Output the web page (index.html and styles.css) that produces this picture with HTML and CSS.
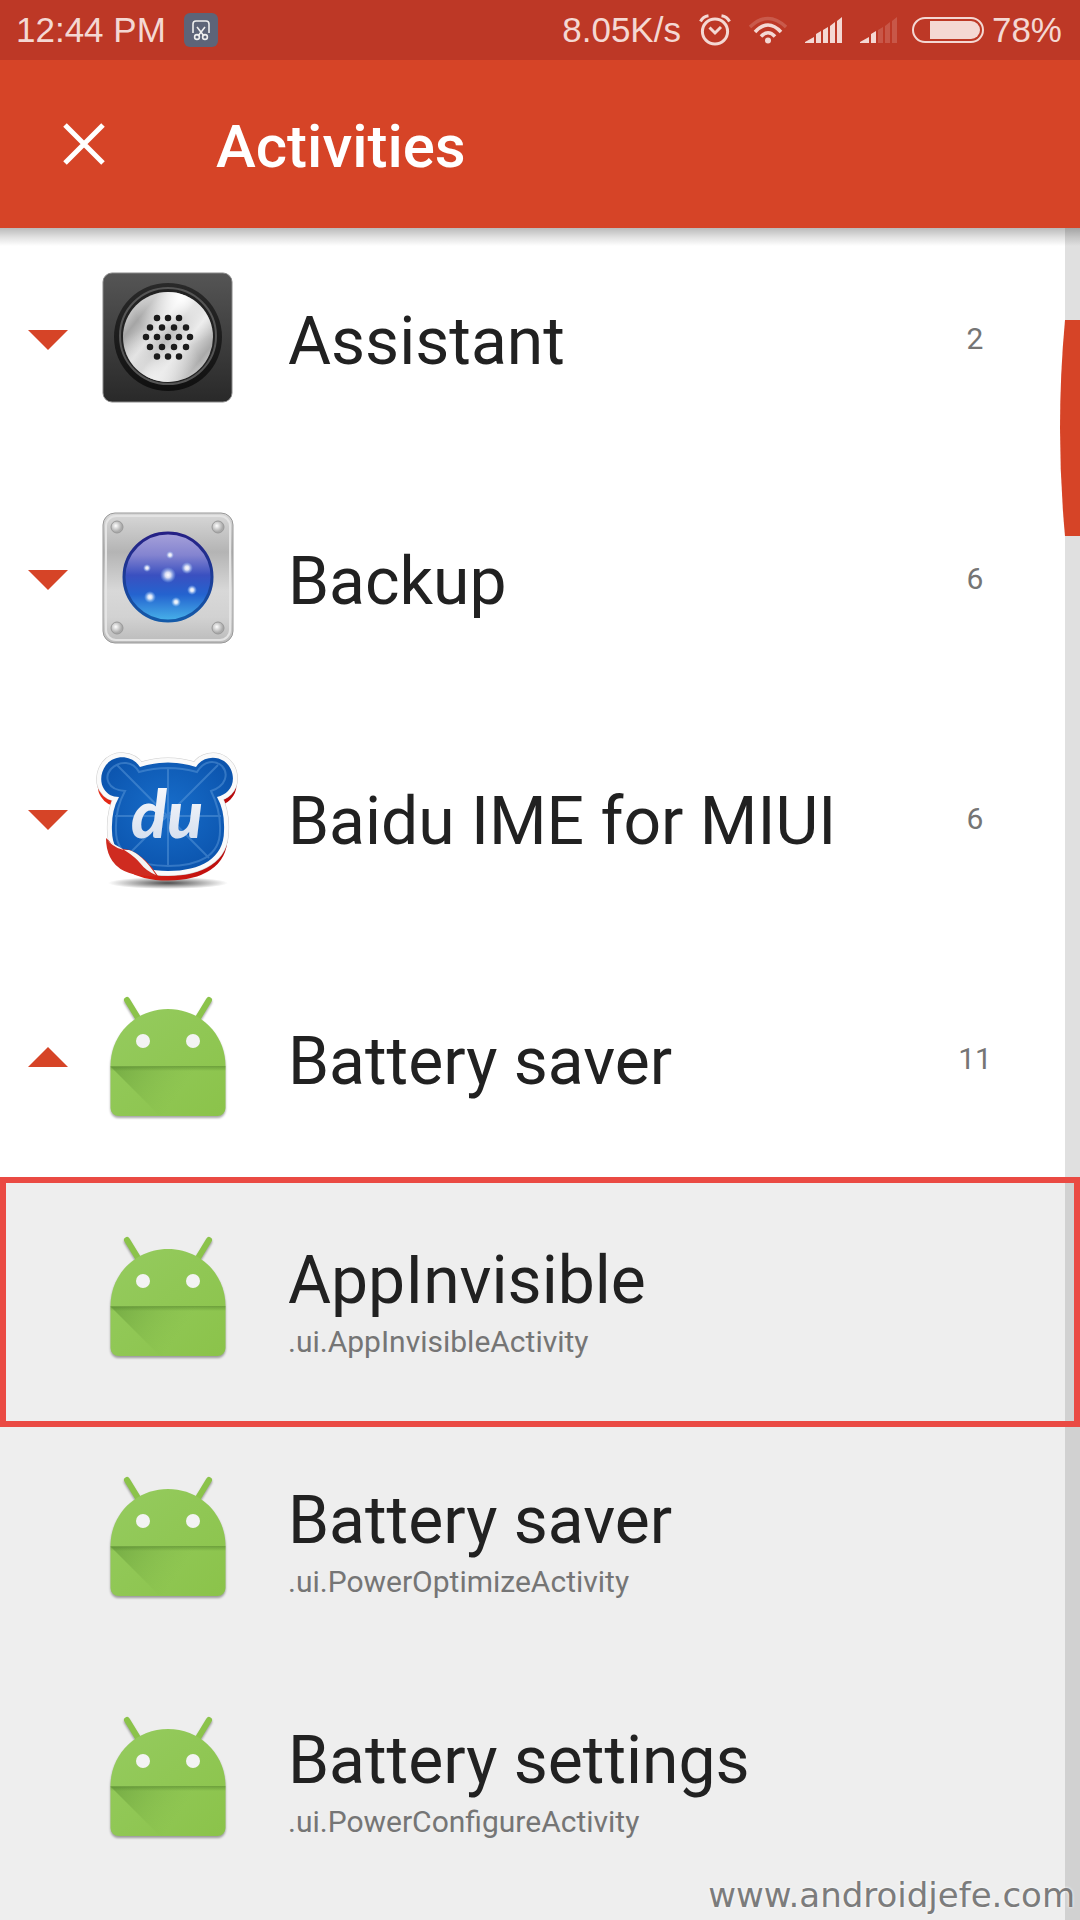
FILE: index.html
```html
<!DOCTYPE html>
<html lang="en">
<head>
<meta charset="utf-8">
<meta name="viewport" content="width=device-width, initial-scale=1">
<title>Activities</title>
<link rel="stylesheet" href="styles.css">
</head>
<body>
<svg class="defs" aria-hidden="true">
  <defs>
    <linearGradient id="green" x1="0" y1="0" x2="1" y2="1"><stop offset="0" stop-color="#95cb5f"/><stop offset="1" stop-color="#8bc34a"/></linearGradient>
    <linearGradient id="fold" gradientUnits="userSpaceOnUse" x1="16" y1="82" x2="74" y2="122"><stop offset="0" stop-color="#5d9334" stop-opacity=".55"/><stop offset="1" stop-color="#7cb342" stop-opacity="0"/></linearGradient>
    <linearGradient id="crease" x1="0" y1="0" x2="0" y2="1"><stop offset="0" stop-color="#4c7a28" stop-opacity=".5"/><stop offset="1" stop-color="#4c7a28" stop-opacity="0"/></linearGradient>
    <symbol id="android" viewBox="0 0 144 144">
      <g class="droid">
        <path d="M31 15 42 33M113 15 102 33" stroke="#8bc34a" stroke-width="6" stroke-linecap="round"/>
        <path d="M14.500 81C14.500 49 40 24 72 24s57.500 25 57.500 57v42a8 8 0 0 1-8 8h-99a8 8 0 0 1-8-8z" fill="url(#green)"/>
      </g>
      <path d="M15 82h85L80 131H64z" fill="url(#fold)"/>
      <path d="M14.500 81h115v5h-115z" fill="url(#crease)"/>
      <circle cx="47" cy="56" r="7" fill="#f3f3f3"/><circle cx="97" cy="56" r="7" fill="#f3f3f3"/>
    </symbol>
  </defs>
</svg>

<header class="top">
  <div class="status">
    <div class="status-side">
      <span>12:44 PM</span>
      <svg class="clip" viewBox="0 0 34 34" aria-hidden="true"><rect width="34" height="34" rx="6" fill="#5d6478"/><g fill="none" stroke="#eee" stroke-width="1.6"><path d="M9 20v-9q0-3 3-3h10q3 0 3 3v9M13 14l7 9M21 14l-7 9"/><circle cx="13" cy="24" r="2.4"/><circle cx="21" cy="24" r="2.4"/></g></svg>
    </div>
    <div class="status-side right">
      <span>8.05K/s</span>
      <svg class="alarm" viewBox="0 0 32 32" aria-hidden="true"><g fill="none" stroke="#f4d8d3" stroke-width="3"><circle cx="16" cy="17.500" r="12.600"/><path d="M10.500 13.500 16 19l6-6"/><path d="M1.500 7.500Q4 2.500 9.500 1.700M30.500 7.500Q28 2.500 22.500 1.700"/></g></svg>
      <svg class="wifi" viewBox="0 0 38 28" aria-hidden="true"><g fill="none" stroke="#f4d8d3" stroke-width="3.500"><path d="M1 11Q19-6 37 11" stroke-opacity=".22"/><path d="M6 16Q19 2 32 16M12 20.500Q19 13 26 20.500"/></g><circle cx="19" cy="24.500" r="3" fill="#f4d8d3"/></svg>
      <svg class="signal" viewBox="0 0 37 26" aria-hidden="true"><path d="M0 26v-1l9-5v6zM11 26v-9l5-3v12zM18 26V13l5-3v16zM25 26V9l5-4v21zM32 26V4l5-4v26z" fill="#f4d8d3"/></svg>
      <svg class="signal" viewBox="0 0 37 26" aria-hidden="true"><path d="M0 26v-1l9-5v6zM11 26v-9l5-3v12z" fill="#f4d8d3"/><path d="M18 26V13l5-3v16zM25 26V9l5-4v21zM32 26V4l5-4v26z" fill="#f4d8d3" fill-opacity=".2"/></svg>
      <svg class="battery" viewBox="0 0 72 26" aria-hidden="true"><rect x="1" y="1" width="70" height="24" rx="12" fill="none" stroke="#f4d8d3" stroke-width="2"/><path d="M18 4h41a9 9 0 0 1 0 18H18z" fill="#f4d8d3"/></svg>
      <span>78%</span>
    </div>
  </div>
  <div class="appbar">
    <button class="close" type="button" aria-label="Close"><svg viewBox="0 0 42 42" aria-hidden="true"><path d="M2 2 40 40M40 2 2 40" stroke="#fff" stroke-width="5"/></svg></button>
    <h1>Activities</h1>
  </div>
</header>

<main class="list">
  <section class="row">
    <button class="toggle" type="button" aria-expanded="false" aria-label="Expand Assistant"></button>
    <svg class="icon" viewBox="0 0 144 144" aria-hidden="true">
      <defs>
        <linearGradient id="dark" x1="0" y1="0" x2="0" y2="1"><stop offset="0" stop-color="#555"/><stop offset="1" stop-color="#292929"/></linearGradient>
        <linearGradient id="ring" x1="0" y1="0" x2="0" y2="1"><stop offset="0" stop-color="#292929"/><stop offset="1" stop-color="#101010"/></linearGradient>
        <linearGradient id="steel" x1="0" y1=".1" x2="1" y2=".9"><stop offset="0" stop-color="#eee"/><stop offset=".2" stop-color="#a5a5a5"/><stop offset=".38" stop-color="#ddd"/><stop offset=".5" stop-color="#aaa"/><stop offset=".65" stop-color="#e5e5e5"/><stop offset=".84" stop-color="#a9a9a9"/><stop offset="1" stop-color="#e5e5e5"/></linearGradient>
        <radialGradient id="shine" cx=".65" cy=".05" r=".55"><stop offset="0" stop-color="#fff"/><stop offset="1" stop-color="#fff" stop-opacity="0"/></radialGradient>
        <radialGradient id="shine2" cx=".35" cy=".95" r=".55"><stop offset="0" stop-color="#eee"/><stop offset="1" stop-color="#eee" stop-opacity="0"/></radialGradient>
      </defs>
      <rect x="7" y="8" width="129" height="129" rx="9" fill="url(#dark)" stroke="#888"/>
      <circle cx="72" cy="72" r="54" fill="url(#ring)"/><circle cx="72" cy="71" r="48" fill="#222" stroke="#555" stroke-width="2"/>
      <circle cx="72" cy="72" r="45" fill="url(#steel)"/><circle cx="72" cy="72" r="45" fill="url(#shine)"/><circle cx="72" cy="72" r="45" fill="url(#shine2)"/>
      <path d="M61 53h0M72 53h0M83 53h0M54 62.500h0M66 62.500h0M78 62.500h0M90 62.500h0M50 72h0M61 72h0M72 72h0M83 72h0M94 72h0M54 82h0M66 82h0M78 82h0M90 82h0M61 91.500h0M72 91.500h0M83 91.500h0" stroke="#1b1b1b" stroke-width="6.500" stroke-linecap="round"/>
    </svg>
    <h2 class="name">Assistant</h2>
    <span class="count">2</span>
  </section>

  <section class="row">
    <button class="toggle" type="button" aria-expanded="false" aria-label="Expand Backup"></button>
    <svg class="icon" viewBox="0 0 144 144" aria-hidden="true">
      <defs>
        <linearGradient id="plate" x1="0" y1="0" x2="0" y2="1"><stop offset="0" stop-color="#d8d8d8"/><stop offset=".3" stop-color="#b4b4b4"/><stop offset=".6" stop-color="#d8d8d8"/><stop offset=".8" stop-color="#d2d2d2"/><stop offset="1" stop-color="#bbb"/></linearGradient>
        <linearGradient id="orb" x1="0" y1="0" x2="0" y2="1"><stop offset="0" stop-color="#a6a1da"/><stop offset=".25" stop-color="#8484d0"/><stop offset=".48" stop-color="#3a50c0"/><stop offset=".7" stop-color="#2463cf"/><stop offset="1" stop-color="#48b3ea"/></linearGradient>
        <linearGradient id="orbEdge" x1="0" y1="0" x2="0" y2="1"><stop offset="0" stop-color="#252085"/><stop offset="1" stop-color="#145aa9"/></linearGradient>
        <radialGradient id="glow"><stop offset="0" stop-color="#fff"/><stop offset=".35" stop-color="#fff" stop-opacity=".8"/><stop offset="1" stop-color="#9cf" stop-opacity="0"/></radialGradient>
        <radialGradient id="screw" cx=".4" cy=".4"><stop offset="0" stop-color="#fff"/><stop offset="1" stop-color="#aaa"/></radialGradient>
      </defs>
      <rect x="7" y="8" width="130" height="130" rx="12" fill="url(#plate)" stroke="#999"/>
      <rect x="10" y="11" width="124" height="124" rx="10" fill="none" stroke="#e4e4e4" stroke-width="2"/>
      <g fill="url(#screw)" stroke="#999"><circle cx="21" cy="22" r="6"/><circle cx="122" cy="22" r="6"/><circle cx="21" cy="123" r="6"/><circle cx="122" cy="123" r="6"/></g>
      <circle cx="72" cy="72" r="44" fill="url(#orb)" stroke="url(#orbEdge)" stroke-width="3"/>
      <g fill="url(#glow)"><circle cx="72" cy="70" r="8"/><circle cx="74" cy="50" r="4"/><circle cx="51" cy="63" r="4"/><circle cx="91" cy="63" r="6"/><circle cx="96" cy="85" r="5"/><circle cx="54" cy="92" r="6"/><circle cx="80" cy="97" r="5"/></g>
    </svg>
    <h2 class="name">Backup</h2>
    <span class="count">6</span>
  </section>

  <section class="row">
    <button class="toggle" type="button" aria-expanded="false" aria-label="Expand Baidu IME for MIUI"></button>
    <svg class="icon" viewBox="0 0 144 144" aria-hidden="true">
      <defs>
        <radialGradient id="floor"><stop offset="0" stop-color="#222" stop-opacity=".8"/><stop offset="1" stop-color="#222" stop-opacity="0"/></radialGradient>
        <radialGradient id="blue" cx=".5" cy=".45" r=".6"><stop offset="0" stop-color="#176dca"/><stop offset="1" stop-color="#0b53ac"/></radialGradient>
        <linearGradient id="red" x1="0" y1="0" x2="1" y2="0"><stop offset="0" stop-color="#e52a16"/><stop offset="1" stop-color="#b90a0c"/></linearGradient>
        <linearGradient id="silver" x1="0" y1="0" x2="0" y2="1"><stop offset="0" stop-color="#fff"/><stop offset="1" stop-color="#cfdaec"/></linearGradient>
        <path id="bear" d="M44 22Q72 13 100 22C106 12 119 10 128 16 138 23 140 38 132 46Q128 50 121 52Q129 66 128 86C128 113 105 126 72 126S16 112 16 86Q15 66 23 52C16 52 11 49 8 44 4 38 4 28 10 20 19 9 36 10 44 22z"/>
      </defs>
      <ellipse cx="72" cy="138" rx="60" ry="6" fill="url(#floor)"/>
      <use href="#bear" y="6" fill="url(#red)" stroke="url(#red)" stroke-width="7"/>
      <use href="#bear" fill="#fafafa" stroke="#ccc" stroke-width="10"/>
      <use href="#bear" fill="#fff" stroke="#fafafa" stroke-width="9"/>
      <use href="#bear" fill="url(#blue)"/>
      <g fill="none" stroke="#639fdd" stroke-opacity=".45" stroke-width="2"><path d="M43 27Q72 19 101 27C108 15 119 15 126 21 133 29 130 41 115 46Q125 66 124 86C124 111 102 121 72 121S20 110 20 86Q19 64 29 46C11 45 8 32 15 24 24 15 37 16 43 27zM21 20l92 93M122 20 32 110M72 23v98M19 71h106"/></g>
      <path d="M10 93Q20 104 34 105 50 112 62 131 24 133 14 112 10 104 10 93z" fill="#cf2b20"/>
      <path d="M12 96Q22 106 33 105 46 109 60 130 50 126 44 118 36 108 12 96z" fill="#f4f4f4"/>
      <text x="71" y="93" class="du" text-anchor="middle" fill="url(#silver)">du</text>
    </svg>
    <h2 class="name">Baidu IME for MIUI</h2>
    <span class="count">6</span>
  </section>

  <section class="row">
    <button class="toggle open" type="button" aria-expanded="true" aria-label="Collapse Battery saver"></button>
    <svg class="icon" aria-hidden="true"><use href="#android"/></svg>
    <h2 class="name">Battery saver</h2>
    <span class="count">11</span>
  </section>

  <ul class="children">
    <li class="row child marked">
      <svg class="icon" aria-hidden="true"><use href="#android"/></svg>
      <div class="label"><h3 class="name">AppInvisible</h3><p class="path">.ui.AppInvisibleActivity</p></div>
    </li>
    <li class="row child">
      <svg class="icon" aria-hidden="true"><use href="#android"/></svg>
      <div class="label"><h3 class="name">Battery saver</h3><p class="path">.ui.PowerOptimizeActivity</p></div>
    </li>
    <li class="row child">
      <svg class="icon" aria-hidden="true"><use href="#android"/></svg>
      <div class="label"><h3 class="name">Battery settings</h3><p class="path">.ui.PowerConfigureActivity</p></div>
    </li>
  </ul>
  <div class="track"><svg class="thumb" viewBox="0 0 20 216" preserveAspectRatio="none" aria-hidden="true"><path d="M5 0h15v216H5Q-5 108 5 0z" fill="#d64427"/></svg></div>
  <p class="watermark">www.androidjefe.com</p>
</main>
</body>
</html>
```
FILE: styles.css
```css
* { box-sizing: border-box; }

body {
  margin: 0;
  min-height: 100vh;
  display: flex;
  flex-direction: column;
  background: #fff;
  color: #212121;
  font-family: Roboto, sans-serif;
}

h1, h2, h3, p, ul { margin: 0; padding: 0; }
button { border: 0; padding: 0; background: none; }
svg { display: block; flex: none; }
.defs { position: absolute; width: 0; height: 0; }

/* Status bar and app bar */
.top { position: relative; z-index: 2; background: #d64427; }
.top::after {
  content: "";
  position: absolute;
  top: 100%;
  left: 0;
  right: 0;
  height: 18px;
  background: linear-gradient(rgba(0, 0, 0, .27), rgba(0, 0, 0, .12) 50%, transparent);
}
.status {
  height: 60px;
  padding: 0 18px 0 16px;
  display: flex;
  align-items: center;
  justify-content: space-between;
  background: #bd3826;
  color: #f4d8d3;
  font: 35px/60px "Liberation Sans", sans-serif;
}
.status-side { display: flex; align-items: center; gap: 18px; }
.clip { width: 34px; height: 34px; }
.alarm { width: 32px; height: 32px; }
.wifi { width: 38px; height: 28px; }
.signal { width: 37px; height: 26px; }
.battery { width: 72px; height: 26px; margin-left: -3px; }
.battery + span { margin-left: -10px; }

.appbar { height: 168px; display: flex; align-items: center; }
.close { width: 168px; height: 168px; display: grid; place-items: center; }
.close svg { width: 42px; height: 42px; }
h1 { margin-left: 48px; padding-top: 6px; font-size: 60px; line-height: 72px; font-weight: 500; color: #fff; }

/* The first row is scrolled slightly under the app bar */
.list { position: relative; flex: 1; display: flex; flex-direction: column; margin-top: -8px; }
.row {
  height: 240px;
  padding: 0 60px 6px 0;
  display: grid;
  grid-template-columns: 96px 144px 1fr 90px;
  align-items: center;
}
.toggle { width: 96px; height: 96px; padding-top: 6px; display: grid; place-items: center; }
.toggle::before {
  content: "";
  width: 40px;
  height: 20px;
  background: #d64427;
  clip-path: polygon(0 0, 100% 0, 50% 100%);
}
.toggle.open { padding-top: 0; }
.toggle.open::before { clip-path: polygon(50% 0, 100% 100%, 0 100%); }
.icon { width: 144px; height: 144px; overflow: visible; grid-column: 2; }
.name { padding: 10px 0 0 48px; font-size: 66px; line-height: 78px; font-weight: 400; }
.count { padding-top: 4px; text-align: center; font-size: 30px; line-height: 36px; color: #757575; }
.droid { filter: drop-shadow(0 2px 1px rgba(0, 0, 0, .35)); }
.du { font: italic 900 66px Lato, sans-serif; }

.children { flex: 1; list-style: none; background: #eee; }
.child { grid-template-columns: 96px 144px 1fr; }
.child .name { padding-top: 8px; }
.path { padding: 4px 0 0 48px; font-size: 30px; line-height: 36px; color: #757575; }
.marked { position: relative; z-index: 1; }
.marked::after {
  content: "";
  position: absolute;
  inset: -3px 0 -7px;
  border: 6px solid #ea4a43;
}

/* Fast-scroll track */
.track { position: absolute; top: 0; right: 0; bottom: 0; width: 15px; background: rgba(0, 0, 0, .12); }
.thumb { position: absolute; top: 100px; right: 0; width: 20px; height: 216px; }

.watermark {
  position: absolute;
  right: 5px;
  bottom: 5px;
  font: 34px/40px "DejaVu Sans", sans-serif;
  color: #7c7c7c;
  text-shadow: 0 0 3px #fff;
}
```
